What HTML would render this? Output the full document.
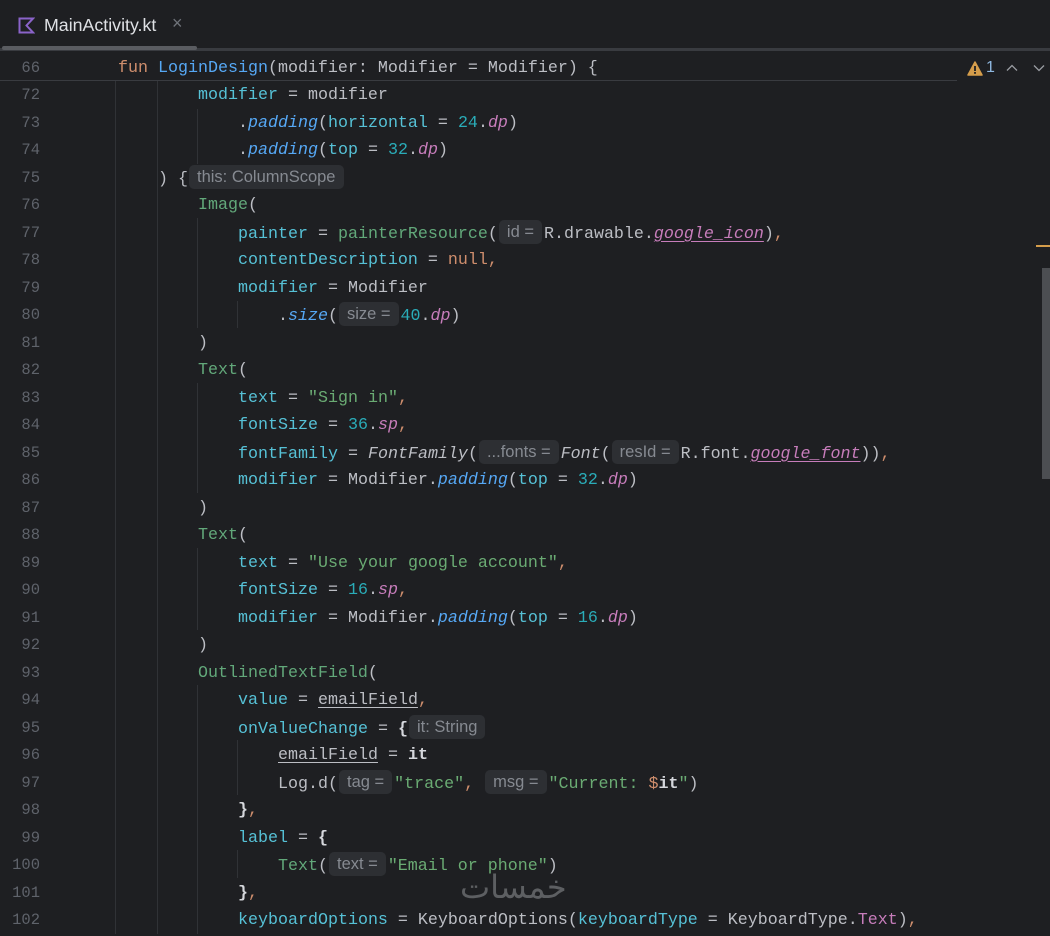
<!DOCTYPE html>
<html><head><meta charset="utf-8"><style>
*{margin:0;padding:0;box-sizing:border-box}
body{width:1050px;height:934px;background:#1e1f22;overflow:hidden;position:relative;font-family:"Liberation Mono",monospace;font-size:16.67px;color:#bcbec4}
.wrap{position:absolute;left:0;top:2px;width:1050px;height:934px}
.ln{position:absolute;left:0;width:40px;text-align:right;color:#5f636b;font-size:15.5px;height:27.5px;line-height:27.5px}
.cl{position:absolute;height:27.5px;line-height:27.5px;white-space:pre}
.k{color:#cf8e6d}.f{color:#56a8f5}.n{color:#56c1d6}.num{color:#2aacb8}.s{color:#6aab73}
.u{color:#c77dbb;font-style:italic}.i{font-style:italic;color:#56a8f5}.c{color:#62a87a}
.ul{text-decoration:underline;text-underline-offset:3px}
.gi{color:#c77dbb;font-style:italic;text-decoration:underline;text-underline-offset:3px}
.b{font-weight:bold;color:#d5d7dc}
.h{display:inline-block;background:#2d2f33;color:#868a91;font-family:"Liberation Sans",sans-serif;font-size:16.5px;border-radius:5px;padding:0 8px;height:24px;line-height:24px;vertical-align:1px;margin:0 2px 0 1px;font-style:normal}
.g{position:absolute;width:1px;background:#303236}
</style></head><body>
<!-- tab bar -->
<svg style="position:absolute;left:18px;top:17px" width="17" height="17" viewBox="0 0 17 17"><path d="M1.5 1.5H15L8.5 8.5L15 15.5H1.5Z" fill="none" stroke="#8a63c9" stroke-width="2"/></svg>
<div style="position:absolute;left:44px;top:15px;font-family:'Liberation Sans',sans-serif;font-size:17.8px;color:#dfe1e5">MainActivity.kt</div>
<div style="position:absolute;left:172px;top:13px;font-family:'Liberation Sans',sans-serif;font-size:18px;color:#6f737a">×</div>
<div style="position:absolute;left:0;top:48px;width:1050px;height:3px;background:#393b40"></div>
<div style="position:absolute;left:2px;top:46px;width:195px;height:4px;background:#5a5c61;border-radius:2px"></div>
<div style="position:absolute;left:0;top:80px;width:957px;height:1px;background:#393b40"></div>
<!-- right toolbar -->
<svg style="position:absolute;left:967px;top:61px" width="16" height="15" viewBox="0 0 16 15"><path d="M8 1L15 14H1Z" fill="#d59d4b" stroke="#d59d4b" stroke-linejoin="round" stroke-width="1.5"/><rect x="7.1" y="5" width="1.8" height="5" fill="#1e1f22"/><rect x="7.1" y="11" width="1.8" height="1.8" fill="#1e1f22"/></svg>
<div style="position:absolute;left:986px;top:59px;font-family:'Liberation Sans',sans-serif;font-size:16px;color:#8fb8e0">1</div>
<svg style="position:absolute;left:1006px;top:64px" width="12" height="8" viewBox="0 0 12 8"><path d="M1 6.5L6 1.5L11 6.5" fill="none" stroke="#9a9da3" stroke-width="1.3"/></svg>
<svg style="position:absolute;left:1033px;top:64px" width="12" height="8" viewBox="0 0 12 8"><path d="M1 1.5L6 6.5L11 1.5" fill="none" stroke="#9a9da3" stroke-width="1.3"/></svg>
<div style="position:absolute;left:1036px;top:245px;width:14px;height:2px;background:#d59d4b"></div>
<div style="position:absolute;left:1042px;top:268px;width:8px;height:211px;background:#4c4e52"></div>
<!-- guides -->
<div class="g" style="left:115px;top:81px;height:853px"></div>
<div class="g" style="left:157px;top:81px;height:853px"></div>
<div class="g" style="left:197px;top:109px;height:55px"></div>
<div class="g" style="left:197px;top:218px;height:110px"></div>
<div class="g" style="left:237px;top:301px;height:27px"></div>
<div class="g" style="left:197px;top:383px;height:110px"></div>
<div class="g" style="left:197px;top:548px;height:82px"></div>
<div class="g" style="left:197px;top:685px;height:249px"></div>
<div class="g" style="left:237px;top:740px;height:55px"></div>
<div class="g" style="left:237px;top:850px;height:28px"></div>
<div class="wrap">
<!-- line numbers -->
<div class="ln" style="top:53px">66</div>
<div class="ln" style="top:80.25px">72</div>
<div class="ln" style="top:107.75px">73</div>
<div class="ln" style="top:135.25px">74</div>
<div class="ln" style="top:162.75px">75</div>
<div class="ln" style="top:190.25px">76</div>
<div class="ln" style="top:217.75px">77</div>
<div class="ln" style="top:245.25px">78</div>
<div class="ln" style="top:272.75px">79</div>
<div class="ln" style="top:300.25px">80</div>
<div class="ln" style="top:327.75px">81</div>
<div class="ln" style="top:355.25px">82</div>
<div class="ln" style="top:382.75px">83</div>
<div class="ln" style="top:410.25px">84</div>
<div class="ln" style="top:437.75px">85</div>
<div class="ln" style="top:465.25px">86</div>
<div class="ln" style="top:492.75px">87</div>
<div class="ln" style="top:520.25px">88</div>
<div class="ln" style="top:547.75px">89</div>
<div class="ln" style="top:575.25px">90</div>
<div class="ln" style="top:602.75px">91</div>
<div class="ln" style="top:630.25px">92</div>
<div class="ln" style="top:657.75px">93</div>
<div class="ln" style="top:685.25px">94</div>
<div class="ln" style="top:712.75px">95</div>
<div class="ln" style="top:740.25px">96</div>
<div class="ln" style="top:767.75px">97</div>
<div class="ln" style="top:795.25px">98</div>
<div class="ln" style="top:822.75px">99</div>
<div class="ln" style="top:850.25px">100</div>
<div class="ln" style="top:877.75px">101</div>
<div class="ln" style="top:905.25px">102</div>
<!-- code -->
<div class="cl" style="left:118px;top:53px"><span class="k">fun</span> <span class="f">LoginDesign</span>(modifier: Modifier = Modifier) {</div>
<div class="cl" style="left:198px;top:80.25px"><span class="n">modifier</span> = modifier</div>
<div class="cl" style="left:238px;top:107.75px">.<span class="i">padding</span>(<span class="n">horizontal</span> = <span class="num">24</span>.<span class="u">dp</span>)</div>
<div class="cl" style="left:238px;top:135.25px">.<span class="i">padding</span>(<span class="n">top</span> = <span class="num">32</span>.<span class="u">dp</span>)</div>
<div class="cl" style="left:158px;top:162.75px">) {<span class="h">this: ColumnScope</span></div>
<div class="cl" style="left:198px;top:190.25px"><span class="c">Image</span>(</div>
<div class="cl" style="left:238px;top:217.75px"><span class="n">painter</span> = <span class="c">painterResource</span>(<span class="h">id =</span>R.drawable.<span class="gi">google_icon</span>)<span class="k">,</span></div>
<div class="cl" style="left:238px;top:245.25px"><span class="n">contentDescription</span> = <span class="k">null,</span></div>
<div class="cl" style="left:238px;top:272.75px"><span class="n">modifier</span> = Modifier</div>
<div class="cl" style="left:278px;top:300.25px">.<span class="i">size</span>(<span class="h">size =</span><span class="num">40</span>.<span class="u">dp</span>)</div>
<div class="cl" style="left:198px;top:327.75px">)</div>
<div class="cl" style="left:198px;top:355.25px"><span class="c">Text</span>(</div>
<div class="cl" style="left:238px;top:382.75px"><span class="n">text</span> = <span class="s">"Sign in"</span><span class="k">,</span></div>
<div class="cl" style="left:238px;top:410.25px"><span class="n">fontSize</span> = <span class="num">36</span>.<span class="u">sp</span><span class="k">,</span></div>
<div class="cl" style="left:238px;top:437.75px"><span class="n">fontFamily</span> = <span style="font-style:italic">FontFamily</span>(<span class="h">...fonts =</span><span style="font-style:italic">Font</span>(<span class="h">resId =</span>R.font.<span class="gi">google_font</span>))<span class="k">,</span></div>
<div class="cl" style="left:238px;top:465.25px"><span class="n">modifier</span> = Modifier.<span class="i">padding</span>(<span class="n">top</span> = <span class="num">32</span>.<span class="u">dp</span>)</div>
<div class="cl" style="left:198px;top:492.75px">)</div>
<div class="cl" style="left:198px;top:520.25px"><span class="c">Text</span>(</div>
<div class="cl" style="left:238px;top:547.75px"><span class="n">text</span> = <span class="s">"Use your google account"</span><span class="k">,</span></div>
<div class="cl" style="left:238px;top:575.25px"><span class="n">fontSize</span> = <span class="num">16</span>.<span class="u">sp</span><span class="k">,</span></div>
<div class="cl" style="left:238px;top:602.75px"><span class="n">modifier</span> = Modifier.<span class="i">padding</span>(<span class="n">top</span> = <span class="num">16</span>.<span class="u">dp</span>)</div>
<div class="cl" style="left:198px;top:630.25px">)</div>
<div class="cl" style="left:198px;top:657.75px"><span class="c">OutlinedTextField</span>(</div>
<div class="cl" style="left:238px;top:685.25px"><span class="n">value</span> = <span class="ul">emailField</span><span class="k">,</span></div>
<div class="cl" style="left:238px;top:712.75px"><span class="n">onValueChange</span> = <span class="b">{</span><span class="h">it: String</span></div>
<div class="cl" style="left:278px;top:740.25px"><span class="ul">emailField</span> = <span class="b">it</span></div>
<div class="cl" style="left:278px;top:767.75px">Log.d(<span class="h">tag =</span><span class="s">"trace"</span><span class="k">,</span> <span class="h">msg =</span><span class="s">"Current: </span><span class="k">$</span><span class="b">it</span><span class="s">"</span>)</div>
<div class="cl" style="left:238px;top:795.25px"><span class="b">}</span><span class="k">,</span></div>
<div class="cl" style="left:238px;top:822.75px"><span class="n">label</span> = <span class="b">{</span></div>
<div class="cl" style="left:278px;top:850.25px"><span class="c">Text</span>(<span class="h">text =</span><span class="s">"Email or phone"</span>)</div>
<div class="cl" style="left:238px;top:877.75px"><span class="b">}</span><span class="k">,</span></div>
<div class="cl" style="left:238px;top:905.25px"><span class="n">keyboardOptions</span> = KeyboardOptions(<span class="n">keyboardType</span> = KeyboardType.<span style="color:#c77dbb">Text</span>)<span class="k">,</span></div>
</div>
<div style="position:absolute;left:460px;top:868px;font-family:'DejaVu Sans',sans-serif;font-size:32px;color:#6d6f73;opacity:.8">خمسات</div>
</body></html>
